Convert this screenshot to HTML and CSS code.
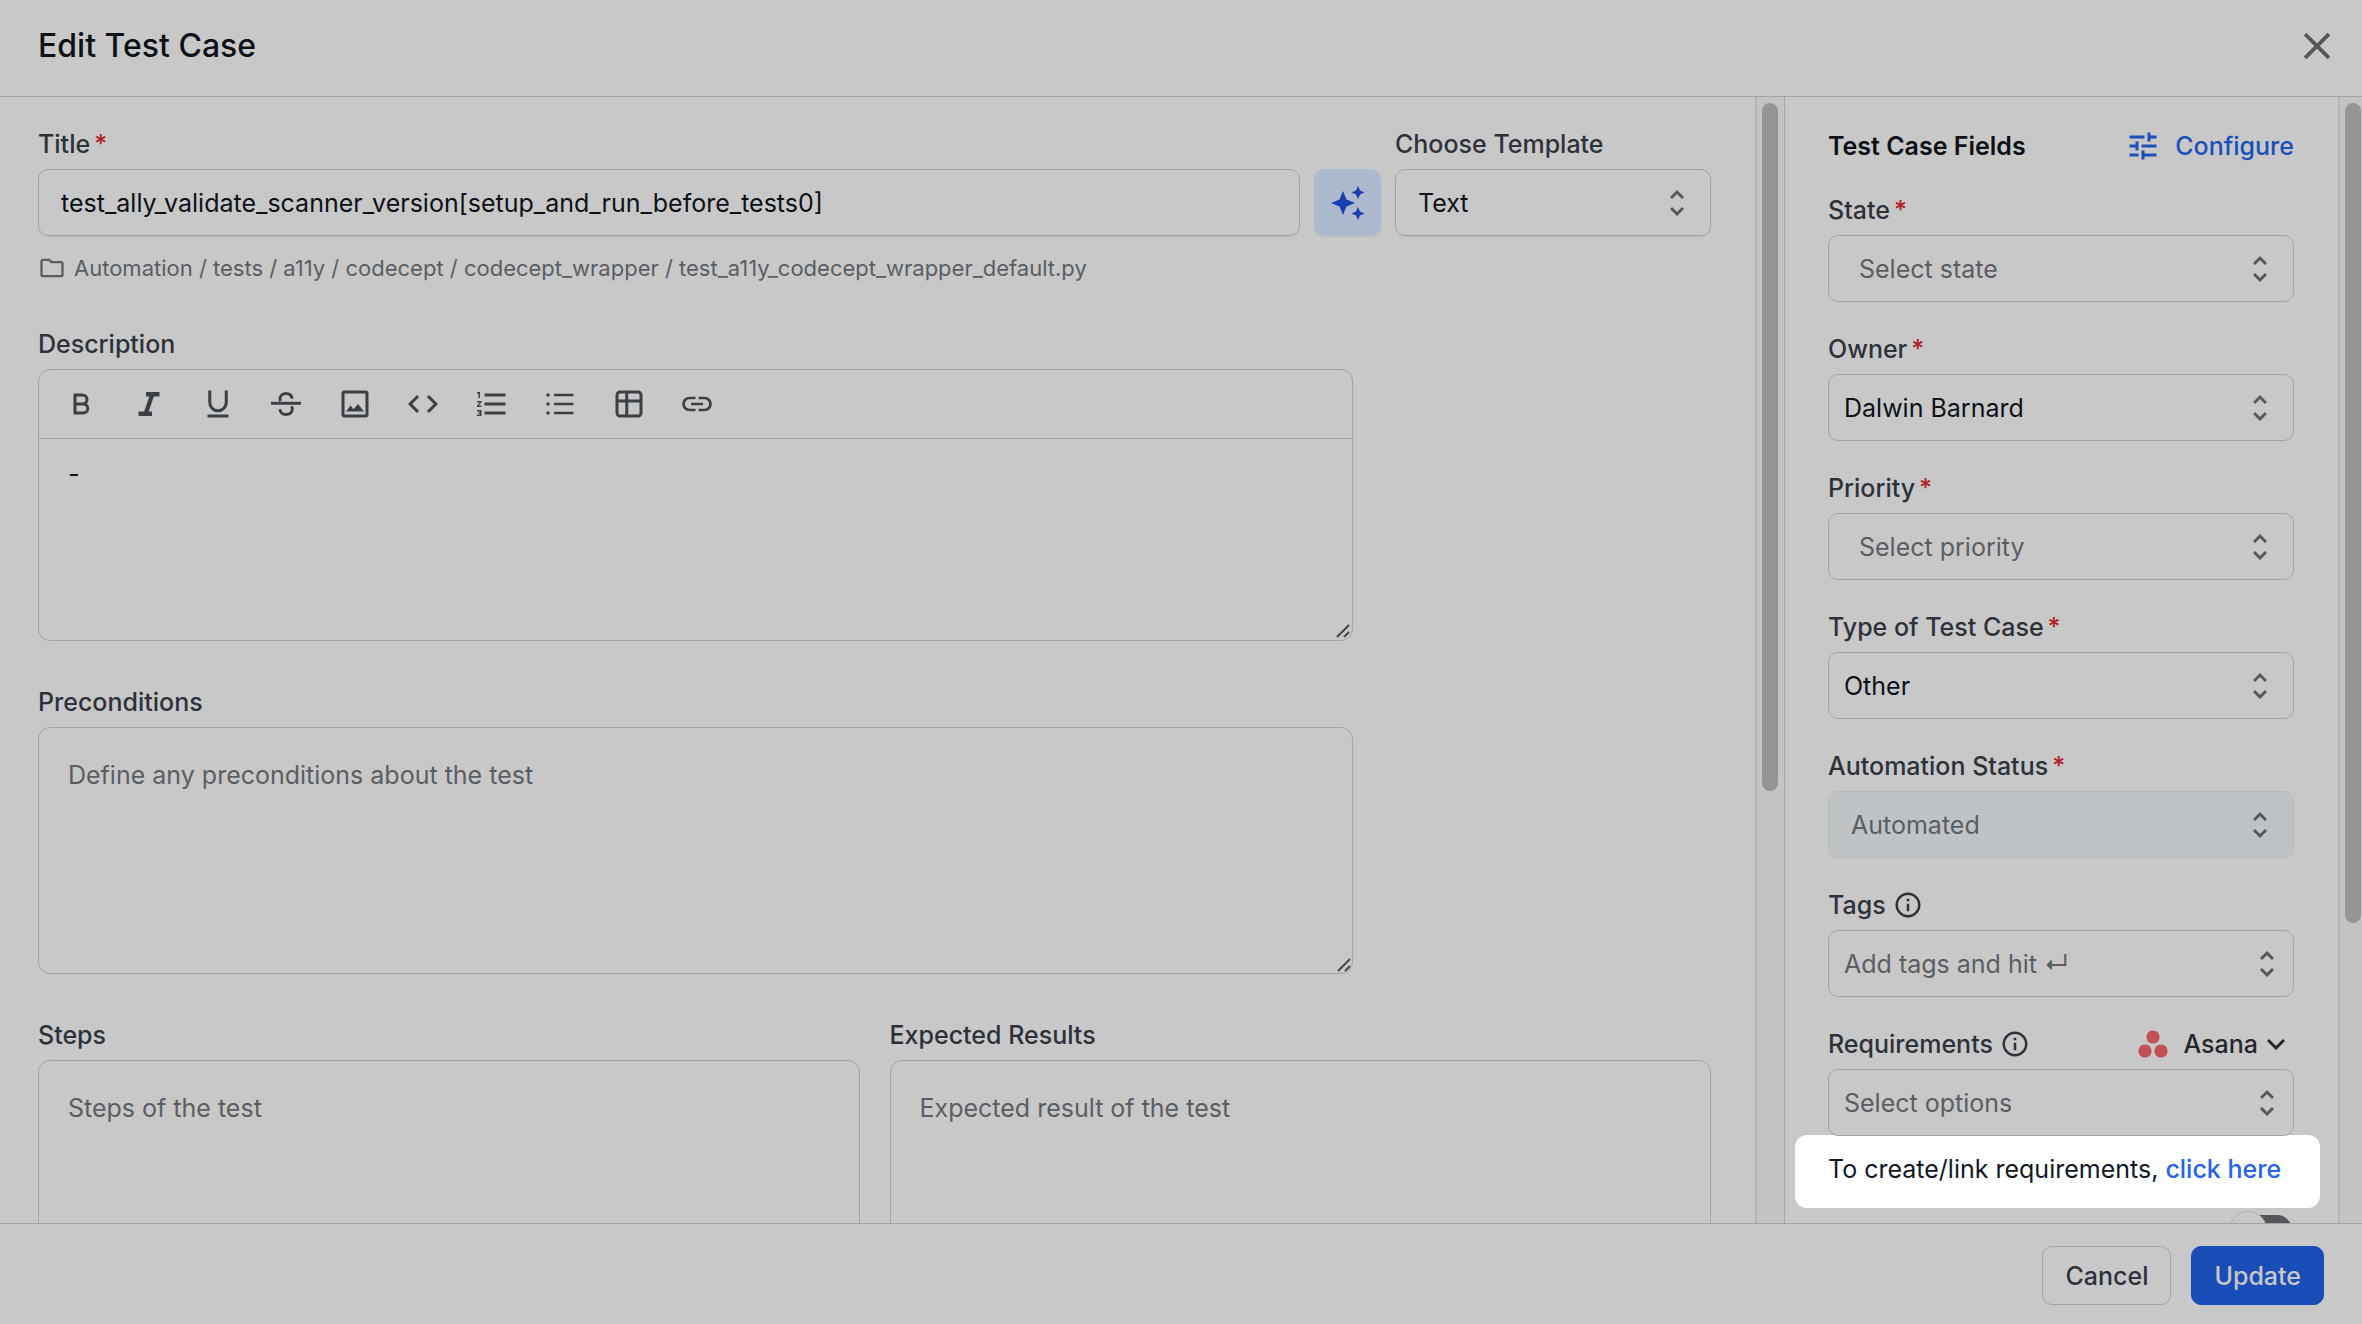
FILE: index.html
```html
<!DOCTYPE html>
<html lang="en">
<head>
    <meta charset="utf-8">
    <title>Edit Test Case</title>
    <link rel="stylesheet" href="styles.css">
</head>
<body>
    <!-- shared icons -->
    <svg class="sprite" aria-hidden="true">
        <symbol id="updown" viewBox="0 0 14 28">
            <path d="M1 9l6-6 6 6M1 19l6 6 6-6" fill="none" stroke="currentColor" stroke-width="3"/>
        </symbol>
        <symbol id="info" viewBox="0 0 24 24">
            <path d="M11 7h2v2h-2zm0 4h2v6h-2zm1-9C6.480 2 2 6.480 2 12s4.480 10 10 10 10-4.480 10-10S17.520 2 12 2zm0 18c-4.410 0-8-3.590-8-8s3.590-8 8-8 8 3.590 8 8-3.590 8-8 8z" fill="currentColor"/>
        </symbol>
        <symbol id="grip" viewBox="0 0 14 14">
            <path d="M1 13L13 1M8 13l5-5" fill="none" stroke="currentColor" stroke-width="2"/>
        </symbol>
    </svg>

    <header class="header">
        <h1>Edit Test Case</h1>
        <button class="close" aria-label="Close">
            <svg viewBox="0 0 24 24"><path d="M1 1l22 22M23 1L1 23" fill="none" stroke="currentColor" stroke-width="3.500"/></svg>
        </button>
    </header>

    <div class="content">
        <main class="main">
            <div class="title-row">
                <div class="field grow">
                    <label for="title">Title<span class="req">*</span></label>
                    <input class="box" id="title" type="text" value="test_ally_validate_scanner_version[setup_and_run_before_tests0]">
                </div>
                <button class="magic" aria-label="Generate with AI">
                    <svg viewBox="0 0 36 36"><path d="M13 6l3.500 8.500L25 18l-8.500 3.500L13 30l-3.500-8.500L1 18l8.500-3.500zM28 1l2 4.500L34.500 7.500 30 9.500 28 14l-2-4.500L21.500 7.500 26 5.500zM28 22l2 4.500 4.500 2-4.500 2L28 35l-2-4.500-4.500-2 4.500-2z" fill="currentColor"/></svg>
                </button>
                <div class="field template">
                    <label for="template">Choose Template</label>
                    <div class="select">
                        <select class="box" id="template"><option>Text</option></select>
                        <svg><use href="#updown"/></svg>
                    </div>
                </div>
            </div>
            <div class="path">
                <svg viewBox="0 0 24 24"><path d="M9.170 6l2 2H20v10H4V6h5.170M10 4H4c-1.100 0-1.990.9-1.990 2L2 18c0 1.100.9 2 2 2h16c1.100 0 2-.9 2-2V8c0-1.100-.9-2-2-2h-8l-2-2z" fill="currentColor"/></svg>
                <span>Automation / tests / a11y / codecept / codecept_wrapper / test_a11y_codecept_wrapper_default.py</span>
            </div>

            <div class="field narrow">
                <label for="description">Description</label>
                <div class="editor">
                    <div class="toolbar">
                        <button aria-label="Bold"><svg viewBox="0 0 24 24"><path d="M8 6h5a3 3 0 0 1 0 6H8zM8 12h5.500a3 3 0 0 1 0 6H8z" fill="none" stroke="currentColor" stroke-width="2"/></svg></button>
                        <button aria-label="Italic"><svg viewBox="0 0 24 24"><path d="M10 4v3h2.210l-3.420 10H5v3h9v-3h-2.210l3.420-10H19V4z" fill="currentColor"/></svg></button>
                        <button aria-label="Underline"><svg viewBox="0 0 24 24"><path d="M6.500 3v8a5.500 5.500 0 0 0 11 0V3M5 20h14" fill="none" stroke="currentColor" stroke-width="2"/></svg></button>
                        <button aria-label="Strikethrough"><svg viewBox="0 0 24 24"><path d="M2 11.500h20M16 8.500C15.800 6 14 5 12 5S8 6.200 8 8.500c0 .6.100 1 .4 1.500M8 15.500c.2 2.500 2 3.500 4 3.500s4.200-1 4.200-3.500c0-.8-.2-1.400-.6-2" fill="none" stroke="currentColor" stroke-width="2"/></svg></button>
                        <button aria-label="Image"><svg viewBox="0 0 24 24"><rect x="4" y="4" width="16" height="16" rx="1" fill="none" stroke="currentColor" stroke-width="2"/><path d="M6 17l3-4 2 2.500L14 12l4 5z" fill="currentColor"/></svg></button>
                        <button aria-label="Code"><svg viewBox="0 0 24 24"><path d="M9.400 16.600L4.800 12l4.600-4.600L8 6l-6 6 6 6 1.400-1.400zm5.200 0l4.600-4.600-4.600-4.600L16 6l6 6-6 6-1.400-1.400z" fill="currentColor"/></svg></button>
                        <button aria-label="Numbered list"><svg viewBox="0 0 24 24"><path d="M2 17h2v.5H3v1h1v.5H2v1h3v-4H2v1zm1-9h1V4H2v1h1v3zm-1 3h1.800L2 13.100v.9h3v-1H3.200L5 10.900V10H2v1zm5-6v2h14V5H7zm0 14h14v-2H7v2zm0-6h14v-2H7v2z" fill="currentColor"/></svg></button>
                        <button aria-label="Bulleted list"><svg viewBox="0 0 24 24"><path d="M8 6h13M8 12h13M8 18h13" fill="none" stroke="currentColor" stroke-width="1.800"/><circle cx="4" cy="6" r="1.200" fill="currentColor"/><circle cx="4" cy="12" r="1.200" fill="currentColor"/><circle cx="4" cy="18" r="1.200" fill="currentColor"/></svg></button>
                        <button aria-label="Table"><svg viewBox="0 0 24 24"><path d="M6 4h12a2 2 0 0 1 2 2v12a2 2 0 0 1-2 2H6a2 2 0 0 1-2-2V6a2 2 0 0 1 2-2zM4 10h16M10.500 4v16" fill="none" stroke="currentColor" stroke-width="2"/></svg></button>
                        <button aria-label="Link"><svg viewBox="0 0 24 24"><path d="M11 8H7a4 4 0 0 0 0 8h4M13 8h4a4 4 0 0 1 0 8h-4M8 12h8" fill="none" stroke="currentColor" stroke-width="1.800"/></svg></button>
                    </div>
                    <div class="area">
                        <textarea id="description">-</textarea>
                        <svg><use href="#grip"/></svg>
                    </div>
                </div>
            </div>

            <div class="field narrow">
                <label for="preconditions">Preconditions</label>
                <div class="area tall">
                    <textarea class="box" id="preconditions" placeholder="Define any preconditions about the test"></textarea>
                    <svg><use href="#grip"/></svg>
                </div>
            </div>

            <div class="steps-row">
                <div class="field">
                    <label for="steps">Steps</label>
                    <div class="area tall">
                        <textarea class="box" id="steps" placeholder="Steps of the test"></textarea>
                        <svg><use href="#grip"/></svg>
                    </div>
                </div>
                <div class="field">
                    <label for="expected">Expected Results</label>
                    <div class="area tall">
                        <textarea class="box" id="expected" placeholder="Expected result of the test"></textarea>
                        <svg><use href="#grip"/></svg>
                    </div>
                </div>
            </div>
        </main>
        <div class="track"><div class="thumb thumb-main"></div></div>

        <aside class="side">
            <div class="side-head">
                <h2>Test Case Fields</h2>
                <button class="configure">
                    <svg viewBox="0 0 24 24"><path d="M3 17v2h6v-2H3zM3 5v2h10V5H3zm10 16v-2h8v-2h-8v-2h-2v6h2zM7 9v2H3v2h4v2h2V9H7zm14 4v-2H11v2h10zm-6-4h2V7h4V5h-4V3h-2v6z" fill="currentColor"/></svg>
                    Configure
                </button>
            </div>
            <div class="field">
                <label for="state">State<span class="req">*</span></label>
                <div class="select">
                    <select class="box empty" id="state"><option>Select state</option></select>
                    <svg><use href="#updown"/></svg>
                </div>
            </div>
            <div class="field">
                <label for="owner">Owner<span class="req">*</span></label>
                <div class="select">
                    <select class="box" id="owner"><option>Dalwin Barnard</option></select>
                    <svg><use href="#updown"/></svg>
                </div>
            </div>
            <div class="field">
                <label for="priority">Priority<span class="req">*</span></label>
                <div class="select">
                    <select class="box empty" id="priority"><option>Select priority</option></select>
                    <svg><use href="#updown"/></svg>
                </div>
            </div>
            <div class="field">
                <label for="type">Type of Test Case<span class="req">*</span></label>
                <div class="select">
                    <select class="box" id="type"><option>Other</option></select>
                    <svg><use href="#updown"/></svg>
                </div>
            </div>
            <div class="field">
                <label for="automation">Automation Status<span class="req">*</span></label>
                <div class="select">
                    <select class="box" id="automation" disabled><option>Automated</option></select>
                    <svg><use href="#updown"/></svg>
                </div>
            </div>
            <div class="field">
                <div class="label-row">
                    <label for="tags">Tags</label>
                    <svg class="info"><use href="#info"/></svg>
                </div>
                <div class="select multi">
                    <input class="box" id="tags" type="text" placeholder="Add tags and hit ↵">
                    <svg><use href="#updown"/></svg>
                </div>
            </div>
            <div class="field">
                <div class="label-row">
                    <label for="requirements">Requirements</label>
                    <svg class="info"><use href="#info"/></svg>
                    <button class="tracker">
                        <svg class="asana" viewBox="0 0 30 28"><circle cx="15" cy="7" r="6.600"/><circle cx="7" cy="21" r="6.600"/><circle cx="23" cy="21" r="6.600"/></svg>
                        Asana
                        <svg class="caret" viewBox="0 0 18 12"><path d="M1 2l8 8 8-8" fill="none" stroke="currentColor" stroke-width="3"/></svg>
                    </button>
                </div>
                <div class="select multi">
                    <input class="box" id="requirements" type="text" placeholder="Select options">
                    <svg><use href="#updown"/></svg>
                </div>
            </div>
            <p class="hint">To create/link requirements, <a href="#">click here</a></p>
            <input class="toggle" type="checkbox" aria-label="Attachments">
        </aside>
        <div class="track"><div class="thumb thumb-side"></div></div>
    </div>

    <footer class="footer">
        <button class="btn">Cancel</button>
        <button class="btn primary">Update</button>
    </footer>
</body>
</html>
```
FILE: styles.css
```css
* {
    box-sizing: border-box;
}
body {
    margin: 0;
    height: 100vh;
    display: flex;
    flex-direction: column;
    background-color: #c8c8c8;
    color: #0d1117;
    font-family: Inter, "Liberation Sans", sans-serif;
    font-size: 25px;
    line-height: 30px;
}
button, input, select, textarea {
    font: inherit;
    color: inherit;
}
button {
    padding: 0;
    border: none;
    background: none;
    display: flex;
    align-items: center;
    justify-content: center;
    cursor: pointer;
}
h1, h2, p {
    margin: 0;
}
.sprite {
    display: none;
}

/* header */
.header {
    flex: none;
    display: flex;
    justify-content: space-between;
    align-items: center;
    padding: 22px 32px 27px 38px;
    border-bottom: 1px solid #a3a4a6;
}
.header h1 {
    font-size: 32px;
    line-height: 47px;
    font-weight: 500;
}
.close svg {
    width: 26px;
    height: 26px;
    color: #54585d;
}

/* panels */
.content {
    flex: 1;
    min-height: 0;
    display: flex;
}
.main, .side {
    overflow-y: auto;
    scrollbar-width: none;
}
.main {
    flex: 1;
    min-width: 0;
    padding: 32px 44px 32px 38px;
}
.side {
    flex: none;
    width: 554px;
    padding: 34px 44px 0 43px;
    border-left: 1px solid #a3a4a6;
}
.track {
    flex: none;
    padding: 6px 6px 0 5px;
    border-left: 2px solid #b5b5b5;
    background-color: #c4c4c4;
}
.track:last-child {
    padding-right: 1px;
}
.thumb {
    width: 16px;
    border-radius: 8px;
    background-color: #959595;
}
.thumb-main {
    height: 61.4%;
}
.thumb-side {
    height: 73.2%;
}

/* fields */
.field {
    display: flex;
    flex-direction: column;
    gap: 10px;
}
label {
    font-weight: 500;
    color: #2d323a;
}
.req {
    margin-left: 4px;
    color: #b4201f;
}
.box {
    width: 100%;
    height: 67px;
    padding: 0 22px;
    border: 1px solid #a3a4a6;
    border-radius: 10px;
    background-color: transparent;
    appearance: none;
    outline: none;
}
::placeholder {
    color: #5a5e63;
    opacity: 1;
}
.select {
    display: grid;
    align-items: center;
}
.select > * {
    grid-area: 1 / 1;
}
.select svg {
    justify-self: end;
    width: 14px;
    height: 28px;
    margin-right: 27px;
    color: #54585d;
    pointer-events: none;
}
.select.multi svg {
    margin-right: 20px;
}
.side .box {
    padding: 0 15px;
}
.side .box.empty {
    padding: 0 30px;
    color: #5a5e63;
}
.side .box:disabled {
    padding: 0 22px;
    color: #5a5e63;
    border-color: #b6b9b9;
    background-color: #c0c3c5;
    opacity: 1;
}

.title-row {
    display: flex;
    align-items: flex-end;
    gap: 14px;
}
.title-row .box, .magic {
    box-shadow: 0 1px 2px rgba(0, 0, 0, 0.06);
}
.grow {
    flex: 1;
}
.template {
    width: 316px;
}
.magic {
    width: 67px;
    height: 67px;
    border-radius: 10px;
    background-color: #adb9cc;
    color: #173fb0;
}
.magic svg {
    width: 36px;
    height: 36px;
}
.path {
    display: flex;
    align-items: center;
    gap: 8px;
    margin: 17px 0 46px;
    font-size: 22px;
    color: #5a5e63;
}
.path svg {
    width: 28px;
    height: 28px;
}

.narrow {
    width: 1315px;
    max-width: 100%;
    margin-bottom: 46px;
}
.editor {
    border: 1px solid #a3a4a6;
    border-radius: 12px;
}
.toolbar {
    display: flex;
    justify-content: space-between;
    width: 700px;
    max-width: 100%;
    padding: 14px 22px;
}
.toolbar button {
    width: 40px;
    height: 40px;
    color: #3b4046;
}
.toolbar svg {
    width: 36px;
    height: 36px;
}
.area {
    display: grid;
    height: 202px;
}
.area > * {
    grid-area: 1 / 1;
}
.area textarea {
    width: 100%;
    height: 100%;
    padding: 20px 29px;
    border: none;
    background-color: transparent;
    resize: none;
    outline: none;
}
.area.tall {
    height: 247px;
}
.area.tall textarea {
    padding: 32px 29px;
    border: 1px solid #a3a4a6;
    border-radius: 12px;
}
.area svg {
    align-self: end;
    justify-self: end;
    width: 14px;
    height: 14px;
    margin: 2px;
    color: #45484b;
}
.editor .area {
    border-top: 1px solid #a3a4a6;
}
.steps-row {
    display: grid;
    grid-template-columns: 1fr 1fr;
    gap: 30px;
}

/* side panel */
.side-head {
    display: flex;
    justify-content: space-between;
    align-items: center;
    margin-bottom: 34px;
}
.side-head h2 {
    font-size: 25px;
    line-height: 30px;
    font-weight: 600;
}
.configure {
    height: 30px;
    gap: 14px;
    font-weight: 500;
    color: #1d4fbb;
}
.configure svg {
    width: 36px;
    height: 36px;
}
.side .field + .field {
    margin-top: 32px;
}
.label-row {
    display: flex;
    align-items: center;
    gap: 7px;
}
.info {
    width: 30px;
    height: 30px;
    color: #2d323a;
}
.tracker {
    height: 30px;
    margin-left: auto;
    margin-right: 9px;
    gap: 9px;
    font-weight: 500;
    color: #24282e;
}
.asana {
    width: 30px;
    height: 28px;
    margin-right: 6px;
    fill: #c25155;
}
.caret {
    width: 18px;
    height: 12px;
}
.hint {
    margin: -1px -26px 0 -33px;
    padding: 19px 33px 24px;
    border-radius: 12px;
    background-color: #fff;
    color: #111827;
    white-space: nowrap;
}
.hint a {
    color: #2563eb;
    font-weight: 500;
    text-decoration: none;
}
.toggle {
    display: flex;
    align-items: center;
    appearance: none;
    width: 58px;
    height: 30px;
    margin: 7px 2px 0 auto;
    border-radius: 15px;
    background-color: #54565a;
}
.toggle::before {
    content: "";
    flex: none;
    width: 36px;
    height: 36px;
    margin-left: -5px;
    border: 1px solid #b0b0b0;
    border-radius: 50%;
    background-color: #c8c8c8;
}

/* footer */
.footer {
    flex: none;
    display: flex;
    justify-content: flex-end;
    gap: 20px;
    padding: 22px 38px 19px;
    border-top: 1px solid #a3a4a6;
}
.btn {
    height: 59px;
    padding: 0 22px;
    border: 1px solid #a3a4a6;
    border-radius: 10px;
    font-weight: 500;
    color: #2d323a;
}
.btn.primary {
    border-color: #1b4db8;
    background-color: #1b4db8;
    color: #c8c8c8;
}
```
